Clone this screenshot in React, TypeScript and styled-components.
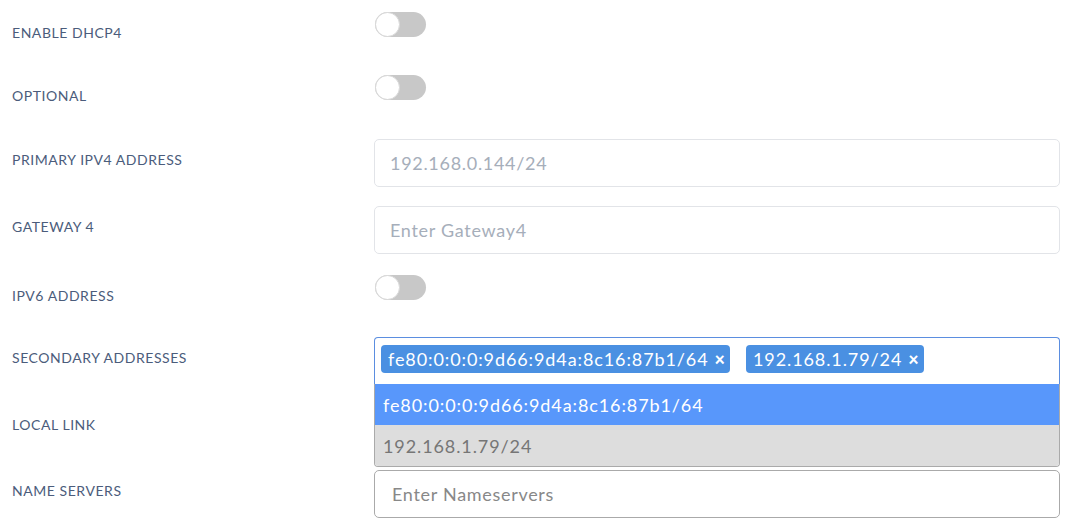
import React from 'react';
import styled, { createGlobalStyle } from 'styled-components';

const GlobalStyle = createGlobalStyle`
  body {
    margin: 0;
    background: #ffffff;
    font-family: Lato, "Open Sans", sans-serif;
  }
`;

const Form = styled.div`
  display: flex;
  flex-direction: column;
  width: 1060px;
`;

const Row = styled.div<{ $top: number }>`
  display: grid;
  grid-template-columns: 374px 686px;
  align-items: center;
  margin-top: ${(p) => p.$top}px;
  min-height: 48px;
`;

const Label = styled.label`
  padding-left: 12px;
  margin-top: -8px;
  font-size: 14px;
  letter-spacing: 0.55px;
  text-transform: uppercase;
  color: #4b5c7b;
`;

const Control = styled.div`
  position: relative;
  align-self: start;
  height: 48px;
`;

const Toggle = styled.span`
  display: block;
  position: relative;
  width: 51px;
  height: 25px;
  margin-left: 1px;
  border-radius: 13px;
  background: #c8c8c8;
  &::after {
    content: '';
    position: absolute;
    left: 0;
    top: 0;
    width: 23px;
    height: 23px;
    border-radius: 50%;
    background: #ffffff;
    border: 1px solid #d8d8d8;
  }
`;

const Input = styled.input`
  box-sizing: border-box;
  width: 686px;
  height: 48px;
  padding: 0 15px;
  border: 1px solid #e2e4e8;
  border-radius: 5px;
  font-family: Lato, "Open Sans", sans-serif;
  font-size: 18px;
  letter-spacing: 0.7px;
  color: #333;
  outline: none;
  &::placeholder {
    color: #a6aeba;
  }
`;

const PlainInput = styled(Input)`
  border-color: #aaaaaa;
  padding: 0 17px;
  &::placeholder {
    color: #888888;
  }
`;

const Multi = styled.div`
  box-sizing: border-box;
  display: flex;
  gap: 16px;
  align-items: flex-start;
  width: 686px;
  height: 48px;
  padding: 7px 6px;
  border: 1px solid #5b8ee0;
  border-bottom: none;
  border-radius: 4px 4px 0 0;
`;

const Tag = styled.span`
  display: inline-flex;
  align-items: center;
  gap: 6px;
  height: 28px;
  padding: 0 5px 0 7px;
  border-radius: 4px;
  background: #4a90e2;
  color: #ffffff;
  font-size: 18px;
  letter-spacing: 0.9px;
`;

const Remove = styled.span`
  font-size: 18px;
  font-weight: 900;
  letter-spacing: 0;
`;

const Dropdown = styled.ul`
  position: absolute;
  z-index: 10;
  left: 0;
  top: 47px;
  box-sizing: border-box;
  width: 686px;
  margin: 0;
  padding: 0;
  list-style: none;
  border: 1px solid #aaaaaa;
  border-top: none;
  border-radius: 0 0 4px 4px;
  overflow: hidden;
`;

const Option = styled.li<{ $active?: boolean }>`
  height: 41px;
  display: flex;
  align-items: center;
  padding-left: 8px;
  font-size: 18px;
  letter-spacing: 0.9px;
  background: ${(p) => (p.$active ? '#5897fb' : '#dddddd')};
  color: ${(p) => (p.$active ? '#ffffff' : '#767676')};
`;

const secondary = ['fe80:0:0:0:9d66:9d4a:8c16:87b1/64', '192.168.1.79/24'];

function App() {
  return (
    <>
      <GlobalStyle />
      <Form>
        <Row $top={12}>
          <Label>Enable DHCP4</Label>
          <Control>
            <Toggle />
          </Control>
        </Row>
        <Row $top={15}>
          <Label>Optional</Label>
          <Control>
            <Toggle />
          </Control>
        </Row>
        <Row $top={16}>
          <Label>Primary IPv4 Address</Label>
          <Control>
            <Input placeholder="192.168.0.144/24" />
          </Control>
        </Row>
        <Row $top={19}>
          <Label>Gateway 4</Label>
          <Control>
            <Input placeholder="Enter Gateway4" />
          </Control>
        </Row>
        <Row $top={21}>
          <Label>IPv6 Address</Label>
          <Control>
            <Toggle />
          </Control>
        </Row>
        <Row $top={14}>
          <Label>Secondary Addresses</Label>
          <Control>
            <Multi>
              {secondary.map((s) => (
                <Tag key={s}>
                  {s}
                  <Remove>×</Remove>
                </Tag>
              ))}
            </Multi>
            <Dropdown>
              {secondary.map((s, i) => (
                <Option key={s} $active={i === 0}>
                  {s}
                </Option>
              ))}
            </Dropdown>
          </Control>
        </Row>
        <Row $top={19}>
          <Label>Local Link</Label>
          <Control>
            <Toggle />
          </Control>
        </Row>
        <Row $top={18}>
          <Label>Name Servers</Label>
          <Control>
            <PlainInput placeholder="Enter Nameservers" />
          </Control>
        </Row>
      </Form>
    </>
  );
}

export default App;
